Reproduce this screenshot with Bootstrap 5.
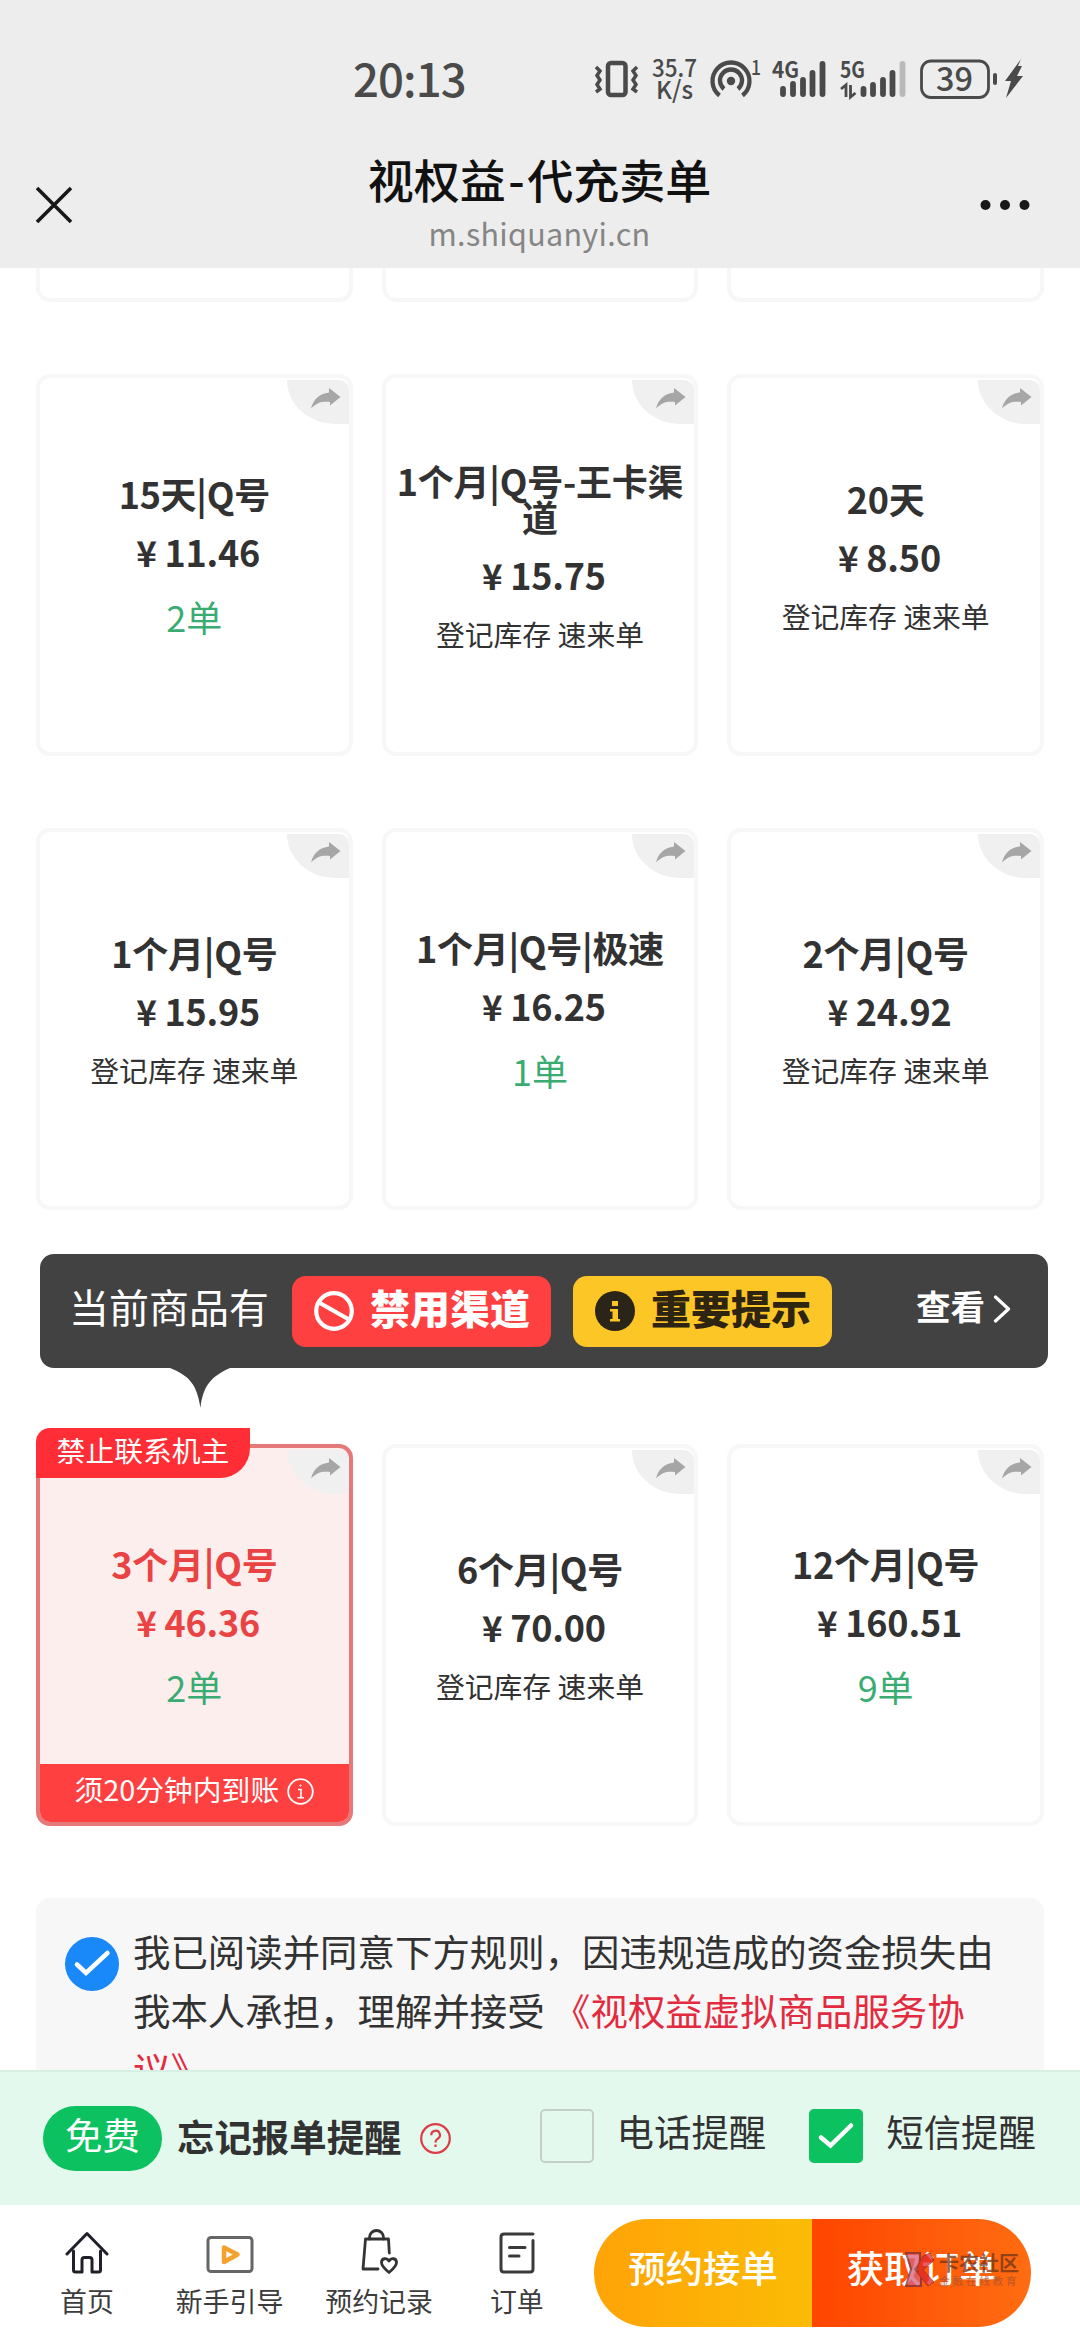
<!DOCTYPE html>
<html lang="zh-CN">
<head>
<meta charset="utf-8">
<meta name="viewport" content="width=device-width, initial-scale=1">
<title>视权益-代充卖单</title>
<link href="https://cdn.jsdelivr.net/npm/bootstrap@5.3.0/dist/css/bootstrap.min.css" rel="stylesheet">
<style>
body{font-family:"Noto Sans CJK SC","Noto Sans",sans-serif;color:#323233;background:#fff;width:1080px;height:2340px;overflow:hidden;letter-spacing:0}
svg{display:block;flex:none}
.top-area{height:268px;background:#ededed;flex:none}
.status-bar{height:158px;padding:0 55px 0 353px;color:#4a4a4a}
.status-bar svg{overflow:visible}
.clock{font-size:45.5px;line-height:46px;font-weight:500;letter-spacing:-.9px;padding-bottom:4px}
.title-bar{height:110px;padding:0 50px 0 35px}
.page-head{margin:-5px 0 0 26px}
.page-title{font-size:46px;line-height:50px;font-weight:500;color:#111}
.page-title span{padding:0 2.5px}
.page-url{font-size:30.5px;line-height:34px;color:#858585;letter-spacing:.3px;margin-top:13px}
.page-main{padding:0 36px;flex:1 1 0;min-height:0}
.goods-row{--bs-gutter-x:29px;flex:none;margin-bottom:72px}
.goods{height:382px;border:4px solid #f7f7f7;border-radius:14px;padding:0 4px 21px;text-align:center}
.goods-cut{height:34px;border-top:0;border-radius:0 0 14px 14px;padding:0}
.goods-name{font-size:36px;line-height:36px;font-weight:700;letter-spacing:-.25px}
.goods-price{font-size:36px;line-height:36px;font-weight:700;margin-top:22px;letter-spacing:-.2px}
.goods-price i{display:inline-block;width:36px;font-style:normal;font-size:35px}
.stock{font-size:36px;line-height:36px;color:#3bac71;margin-top:28px}
.no-stock{font-size:28.8px;line-height:29px;margin-top:26px}
.share{right:0;top:2px;width:62px;height:44px;background:#f0f0f0;border-radius:0 10px 0 48px/0 10px 0 44px;padding:8px 0 0 24px}
.goods.picked{border-color:#e57878;background:#fdeeee}
.picked .goods-name,.picked .goods-price{color:#e94343}
.ban-tag{left:-4px;top:-20px;width:214px;height:50px;background:#ff2e36;color:#fff;border-radius:14px 0 30px 0;font-size:28.8px;line-height:43px}
.limit-bar{left:0;right:0;bottom:0;height:58px;background:#ff4040;color:#fff;border-radius:0 0 10px 10px;font-size:28.8px;line-height:50px;padding-bottom:8px}
.notice{flex:none;width:1008px;height:114px;margin:-28px 0 76px 4px;border-radius:14px;background:#424242;color:#fff;padding:0 37px 0 29px;font-size:40px;line-height:40px}
.notice-lead{width:223px;padding-bottom:10px}
.chip{width:259px;height:71px;border-radius:14px;padding:0 0 0 22px;font-weight:700}
.chip b{padding-bottom:9px}
.chip-ban{background:#ff4040}
.chip-tip{background:#fdc627;color:#2d2412;margin-left:22px}
.more{font-size:34.5px;font-weight:700;padding-bottom:12px}
.pointer{left:130px;top:113px}
.rules{flex:none;height:220px;background:#f7f7f7;border-radius:14px 14px 0 0;padding:24px 29px 0}
.rules p{font-size:37.44px;line-height:59px;width:870px;margin:0 0 0 14px}
.rules .deal{color:#e22b3f}
.rules svg{margin-top:15px}
.remind{flex:none;height:135px;background:#e4f9ee;border-top:2px solid #d6f0e3;padding:0 0 0 43px;font-size:37.44px;line-height:54px;white-space:nowrap}
.free-pill{width:119px;height:65px;background:#0bc160;color:#fff;line-height:57px;border-radius:33px;flex:none}
.remind b{line-height:54px;margin-left:15px;margin-top:-5px}
.remind label{margin-left:23px;margin-top:-15px}
.tick{width:54px;height:54px;border-radius:5px;flex:none;margin-top:-6px}
.tick-off{border:2px solid #c5cfca;margin-left:89px}
.tick-on{background:#0bc160;margin-left:43px}
.foot{flex:none;height:135px;background:#fff;color:#3c3c3c;font-size:26.9px;line-height:32px}
.foot-tab{height:135px;padding-top:22px}
.foot-tab svg{height:48px;margin-bottom:10px}
.go{height:108px;width:218px;font-size:37.44px;font-weight:500;color:#fff;line-height:97px}
.go-book{margin-left:auto;background:linear-gradient(90deg,#ffa307,#fbbc05);border-radius:54px 0 0 54px}
.go-get{background:linear-gradient(90deg,#ff4500,#ff6c11);border-radius:0 54px 54px 0;margin-right:49px;width:219px}
.wmark{left:91px;top:33px;opacity:.75}
.wmark-t{font-size:20px;line-height:22px;font-weight:700;color:#6e3418}
.wmark-s{font-size:10.5px;line-height:12px;letter-spacing:2.9px;margin-top:1px;color:#b0552a}
</style>
</head>
<body class="d-flex flex-column">
<svg width="0" height="0" class="position-absolute">
  <symbol id="arrow" viewBox="0 0 30 21"><path d="M18 0 L29.5 9 L19 17.5 V14 C11 13 6 14.500 0 20.500 C2 12 8 5.500 18 4.500 Z" fill="#a6a6a6"/></symbol>
</svg>
<header class="top-area">
  <div class="status-bar d-flex align-items-center">
    <div class="clock">20:13</div>
    <svg class="ms-auto" width="434" height="46" viewBox="591 56 434 46" fill="none" stroke="#4a4a4a" font-family="'Noto Sans CJK SC',sans-serif">
      <rect x="608" y="63" width="17.500" height="32" rx="3" stroke-width="4.500"/>
      <path d="M596 67l4 4-3 4.500 3 4.500-3 4.500 3 4.500-4 3M637 67l-4 4 3 4.500-3 4.500 3 4.500-3 4.500 4 3" stroke-width="3.500"/>
      <g fill="#4a4a4a" stroke="none">
        <text x="652" y="77" font-size="24.500" font-weight="500" textLength="45" lengthAdjust="spacingAndGlyphs">35.7</text>
        <text x="656" y="99" font-size="24.500" font-weight="500" textLength="37" lengthAdjust="spacingAndGlyphs">K/s</text>
        <text x="751" y="75" font-size="20" font-weight="500" textLength="10" lengthAdjust="spacingAndGlyphs">1</text>
        <text x="772" y="77.500" font-size="22" font-weight="700" textLength="27" lengthAdjust="spacingAndGlyphs">4G</text>
        <text x="840" y="77.500" font-size="22" font-weight="700" textLength="25" lengthAdjust="spacingAndGlyphs">5G</text>
        <text x="936" y="91" font-size="33" font-weight="500" textLength="37" lengthAdjust="spacingAndGlyphs">39</text>
        <circle cx="731" cy="81" r="4.200"/>
        <path d="M1021 59 L1005 81 H1011 L1006 98 L1023 76 H1017 L1022 66 H1018Z"/>
        <rect x="993" y="73" width="4" height="12" rx="2"/>
      </g>
      <path d="M719.500 95.500a18.500 18.500 0 1 1 23 0M724 89a11 11 0 1 1 14 0" stroke-width="4.300"/>
      <g stroke-width="5.800" stroke-linecap="round">
        <path d="M783 89v5M793 84v10M803 80v14M812.500 73v21M822.500 64v30"/>
        <path d="M863.500 89v5M873 85v9M883 80v14M892.500 73v21"/>
        <path d="M902.500 64v30" stroke="#b9b9b9"/>
      </g>
      <path d="M841 89l5-4v12M850.500 85v12l5-4" stroke-width="2.800"/>
      <rect x="921.500" y="61" width="67" height="36.500" rx="9.500" stroke-width="2.800"/>
    </svg>
  </div>
  <div class="title-bar d-flex justify-content-between align-items-center position-relative">
    <svg class="mb-3" width="38" height="38" viewBox="0 0 38 38"><path d="M2 2L36 36M36 2L2 36" stroke="#181818" stroke-width="3.600"/></svg>
    <div class="page-head text-center align-self-start">
      <div class="page-title">视权益<span>-</span>代充卖单</div>
      <div class="page-url">m.shiquanyi.cn</div>
    </div>
    <svg class="mb-3" width="50" height="12" viewBox="0 0 50 12" fill="#181818"><circle cx="5.500" cy="6" r="5"/><circle cx="25" cy="6" r="5"/><circle cx="44.500" cy="6" r="5"/></svg>
  </div>
</header>

<main class="page-main d-flex flex-column overflow-hidden">
  <div class="row goods-row">
    <div class="col-4"><div class="goods goods-cut"></div></div>
    <div class="col-4"><div class="goods goods-cut"></div></div>
    <div class="col-4"><div class="goods goods-cut"></div></div>
  </div>
  <div class="row goods-row">
    <div class="col-4"><div class="goods position-relative d-flex flex-column justify-content-center"><div class="share position-absolute"><svg width="30" height="21"><use href="#arrow"/></svg></div>
      <div class="goods-name">15天|Q号</div><div class="goods-price"><i>¥</i>11.46</div><div class="stock">2单</div></div></div>
    <div class="col-4"><div class="goods position-relative d-flex flex-column justify-content-center"><div class="share position-absolute"><svg width="30" height="21"><use href="#arrow"/></svg></div>
      <div class="goods-name">1个月|Q号-王卡渠道</div><div class="goods-price"><i>¥</i>15.75</div><div class="no-stock">登记库存 速来单</div></div></div>
    <div class="col-4"><div class="goods position-relative d-flex flex-column justify-content-center"><div class="share position-absolute"><svg width="30" height="21"><use href="#arrow"/></svg></div>
      <div class="goods-name">20天</div><div class="goods-price"><i>¥</i>8.50</div><div class="no-stock">登记库存 速来单</div></div></div>
  </div>
  <div class="row goods-row">
    <div class="col-4"><div class="goods position-relative d-flex flex-column justify-content-center"><div class="share position-absolute"><svg width="30" height="21"><use href="#arrow"/></svg></div>
      <div class="goods-name">1个月|Q号</div><div class="goods-price"><i>¥</i>15.95</div><div class="no-stock">登记库存 速来单</div></div></div>
    <div class="col-4"><div class="goods position-relative d-flex flex-column justify-content-center"><div class="share position-absolute"><svg width="30" height="21"><use href="#arrow"/></svg></div>
      <div class="goods-name">1个月|Q号|极速</div><div class="goods-price"><i>¥</i>16.25</div><div class="stock">1单</div></div></div>
    <div class="col-4"><div class="goods position-relative d-flex flex-column justify-content-center"><div class="share position-absolute"><svg width="30" height="21"><use href="#arrow"/></svg></div>
      <div class="goods-name">2个月|Q号</div><div class="goods-price"><i>¥</i>24.92</div><div class="no-stock">登记库存 速来单</div></div></div>
  </div>

  <div class="notice d-flex align-items-center position-relative">
    <div class="notice-lead">当前商品有</div>
    <div class="chip chip-ban d-flex align-items-center gap-3">
      <svg width="40" height="40" viewBox="0 0 40 40" fill="none" stroke="#fff" stroke-width="4.200"><circle cx="20" cy="20" r="17.800"/><path d="M5 11.500L35 28.500"/></svg><b>禁用渠道</b>
    </div>
    <div class="chip chip-tip d-flex align-items-center gap-3">
      <svg width="40" height="40" viewBox="0 0 40 40"><circle cx="20" cy="20" r="20" fill="#2a2518"/><path d="M17 10h6v5h-6zM15 18h8v10h2v2.500H15V28h2.500v-7.500H15z" fill="#fdc627"/></svg><b>重要提示</b>
    </div>
    <div class="more ms-auto d-flex align-items-center">查看<svg class="ms-2 mt-2" width="18" height="28" viewBox="0 0 18 28"><path d="M2.500 2L15.500 14L2.500 26" fill="none" stroke="#fff" stroke-width="3.200" stroke-linecap="round" stroke-linejoin="round"/></svg></div>
    <svg class="pointer position-absolute" width="60" height="42" viewBox="0 0 60 42"><path d="M0 0H60V1C42 9 33 18 30.500 41C27 18 20 9 0 1Z" fill="#424242"/></svg>
  </div>

  <div class="row goods-row">
    <div class="col-4"><div class="goods picked position-relative d-flex flex-column justify-content-center"><div class="share position-absolute"><svg width="30" height="21"><use href="#arrow"/></svg></div>
      <div class="ban-tag position-absolute">禁止联系机主</div>
      <div class="goods-name">3个月|Q号</div><div class="goods-price"><i>¥</i>46.36</div><div class="stock">2单</div>
      <div class="limit-bar position-absolute d-flex justify-content-center align-items-center">须20分钟内到账<svg class="ms-2 mt-1" width="27" height="27" viewBox="0 0 27 27" fill="none" stroke="#fff"><circle cx="13.500" cy="13.500" r="12.300" stroke-width="1.800"/><path d="M11 11.500h3v8M10.500 19.800h6.500" stroke-width="1.600"/><circle cx="13.500" cy="7.500" r=".7"/></svg></div></div></div>
    <div class="col-4"><div class="goods position-relative d-flex flex-column justify-content-center"><div class="share position-absolute"><svg width="30" height="21"><use href="#arrow"/></svg></div>
      <div class="goods-name">6个月|Q号</div><div class="goods-price"><i>¥</i>70.00</div><div class="no-stock">登记库存 速来单</div></div></div>
    <div class="col-4"><div class="goods position-relative d-flex flex-column justify-content-center"><div class="share position-absolute"><svg width="30" height="21"><use href="#arrow"/></svg></div>
      <div class="goods-name">12个月|Q号</div><div class="goods-price"><i>¥</i>160.51</div><div class="stock">9单</div></div></div>
  </div>

  <div class="rules d-flex align-items-start">
    <svg width="54" height="54" viewBox="0 0 54 54"><circle cx="27" cy="27" r="27" fill="#1989fa"/><path d="M12 27.500L21 36L42.500 16" fill="none" stroke="#fff" stroke-width="4.500" stroke-linecap="round"/></svg>
    <p>我已阅读并同意下方规则，因违规造成的资金损失由我本人承担，理解并接受 <span class="deal">《视权益虚拟商品服务协议》</span></p>
  </div>
</main>

<section class="remind d-flex align-items-center">
  <span class="free-pill text-center">免费</span>
  <b>忘记报单提醒</b>
  <svg style="margin-left:18px" width="31" height="31" viewBox="0 0 31 31" fill="none" stroke="#dc3c46" stroke-width="2.200"><circle cx="15.500" cy="15.500" r="14.300"/><path d="M11.300 12.200a4.300 4.300 0 1 1 6.500 3.500c-1.700 1.100-2.300 1.800-2.300 3.800"/><path d="M15.500 21.500v2.500"/></svg>
  <span class="tick tick-off"></span><label>电话提醒</label>
  <span class="tick tick-on"><svg width="54" height="54" viewBox="0 0 54 54"><path d="M12 28.500L21.500 36.500L42 16.500" fill="none" stroke="#fff" stroke-width="4.500" stroke-linecap="round"/></svg></span><label>短信提醒</label>
</section>

<footer class="foot d-flex align-items-center">
  <div class="foot-tab d-flex flex-column align-items-center" style="margin-left:60px">
    <svg width="44" height="48" viewBox="0 0 44 48" fill="none" stroke="#20202a" stroke-width="3" stroke-linejoin="round" stroke-linecap="round"><path d="M2 27L22 6.500L42 27"/><path d="M8.500 24V43q0 2 2 2H17V33q0-2.500 2.500-2.500h5Q27 30.500 27 33V45h6.500q2 0 2-2V24"/></svg>首页</div>
  <div class="foot-tab d-flex flex-column align-items-center" style="margin-left:62px">
    <svg width="48" height="48" viewBox="0 0 48 48" fill="none" stroke-linejoin="round"><rect x="2" y="10.500" width="44" height="34" rx="3" stroke="#666" stroke-width="3"/><path d="M18 20.500V35L31.500 27.500Z" stroke="#f6a02d" stroke-width="4.500"/></svg>新手引导</div>
  <div class="foot-tab d-flex flex-column align-items-center" style="margin-left:42px">
    <svg width="40" height="48" viewBox="-2 0 40 48" fill="none" stroke="#333" stroke-width="2.800" stroke-linecap="round" stroke-linejoin="round"><path d="M17 42H2L4.500 12H27.500L28.300 26"/><path d="M8.500 12V10.500a7 7 0 0 1 14 0V12"/><path d="M28 45.500C22 40.500 20.500 38 20.500 35.500C20.500 31 26 30.500 28 34C30 30.500 35.500 31 35.500 35.500C35.500 38 34 40.500 28 45.500Z"/></svg>预约记录</div>
  <div class="foot-tab d-flex flex-column align-items-center" style="margin-left:57px">
    <svg width="36" height="48" viewBox="0 0 36 48" fill="none" stroke="#3a3a3a" stroke-width="3" stroke-linecap="round" stroke-linejoin="round"><path d="M34 7H5Q2 7 2 10V42Q2 45 5 45H31Q34 45 34 42V13.500"/><path d="M10.500 20.500H26M10.500 29H20"/></svg>订单</div>
  <div class="go go-book text-center">预约接单</div>
  <div class="go go-get text-center position-relative">获取订单
    <div class="wmark position-absolute d-flex align-items-center">
      <svg width="32" height="35" viewBox="0 0 32 35"><path d="M3 1H17V12L12 17L18 24V34H3L8 17Z" fill="#d8607c" stroke="#7a3040" stroke-width="2"/><path d="M20 4L27 1L31 8L20 18L31 30L25 34L15 22V13Z" fill="#e0262c" stroke="#8b2a20"/></svg>
      <div class="text-start ms-1"><div class="wmark-t">卡农社区</div><div class="wmark-s">金融在线教育</div></div>
    </div>
  </div>
</footer>
<script src="https://cdn.jsdelivr.net/npm/bootstrap@5.3.0/dist/js/bootstrap.bundle.min.js"></script>
</body>
</html>
